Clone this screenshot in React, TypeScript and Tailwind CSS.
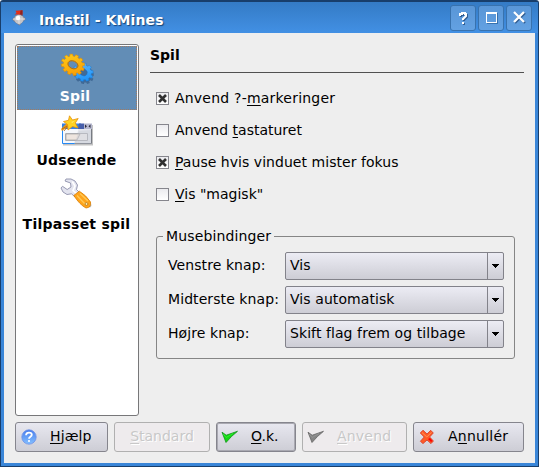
import type { ReactNode } from "react";

const U = ({ children }: { children: ReactNode }) => (
  <span className="underline decoration-1 underline-offset-2 [text-decoration-skip-ink:none]">{children}</span>
);

const gearPoints = (cx: number, cy: number, rx: number, ry: number, n: number) => {
  const pts: string[] = [];
  for (let i = 0; i < n; i++) {
    [[-0.32, 0.82], [-0.24, 1], [0.24, 1], [0.32, 0.82]].forEach(([o, r]) => {
      const a = ((i + o) / n) * Math.PI * 2;
      pts.push(`${(cx + Math.cos(a) * rx * r).toFixed(2)},${(cy + Math.sin(a) * ry * r).toFixed(2)}`);
    });
  }
  return "M" + pts.join("L") + "Z";
};

const Gears = () => (
  <svg width="34" height="32" viewBox="0 0 34 32">
    <defs>
      <linearGradient id="gy" x1="0" y1="0" x2="1" y2="1">
        <stop offset="0" stopColor="#ffd21c" />
        <stop offset="1" stopColor="#f79400" />
      </linearGradient>
      <linearGradient id="gb" x1="0" y1="0" x2="1" y2="1">
        <stop offset="0" stopColor="#64bcff" />
        <stop offset="1" stopColor="#0f8af5" />
      </linearGradient>
    </defs>
    <g transform="rotate(30 23 20)">
      <path d={gearPoints(24.2, 21, 10.4, 9, 10)} fill="#2c5480" opacity=".6" transform="translate(1 1)" />
      <path fillRule="evenodd" d={gearPoints(23.3, 20, 10.4, 9, 10) + "M27.5,20A4.5,3.4 0 1 0 18.5,20A4.5,3.4 0 1 0 27.5,20Z"} fill="url(#gb)" stroke="#1874cc" strokeWidth=".4" />
    </g>
    <g transform="rotate(24 12.5 13)">
      <path fillRule="evenodd" d={gearPoints(12.8, 12.6, 12, 10.4, 12) + "M18,12.6A5.2,3.7 0 1 0 7.6,12.6A5.2,3.7 0 1 0 18,12.6Z"} fill="url(#gy)" stroke="#df8b00" strokeWidth=".5" />
      <ellipse cx="12.8" cy="12.6" rx="5.2" ry="3.8" fill="none" stroke="#a96c1c" strokeWidth=".8" />
    </g>
  </svg>
);

const WindowStar = () => (
  <svg width="34" height="32" viewBox="0 0 34 32">
    <rect x="3" y="10" width="30" height="20.5" fill="#999" opacity=".6" />
    <rect x="2" y="9" width="30" height="20" fill="#e4e6ec" />
    <path d="M2 9H20L14 29H2Z" fill="#f6f8fc" />
    <path d="M2.5 12V28.5H15" fill="none" stroke="#2589f4" />
    <path d="M15 28.5H31.5V9" fill="none" stroke="#777b83" />
    <path d="M2 8.5H21V14H2Z" fill="#3482e5" />
    <path d="M19 8.5H24V14H18Z" fill="#485faa" />
    <path d="M24 8.5H32V14H24Z" fill="#b6b8cf" />
    <path d="M25 9.5V13L27 11.3ZM30.5 9.5V13L28.5 11.3Z" fill="#29293b" />
    <path d="M5.5 18.5H27.5V25.5H5.5Z" fill="#f0eeee" stroke="#b3b4b9" />
    <path d="M6 19H20L17 25H6Z" fill="#eee5df" stroke="#999" strokeWidth=".6" />
    <path d="M19 16L14 29H31V15Z" fill="#bfc4cf" opacity=".35" />
    <path d="M1 14L7 8L9 11L2 16Z" fill="#ef9b13" />
    <path d="M2 14L9 10L4 16" fill="none" stroke="#a75d18" strokeWidth=".8" />
    <path d="M9.5 .8L12.5 5L18.2 3.5L15.3 8L18 13L12.5 11.5L8 15L7.5 9.5L3.5 6.5L8.5 5.3Z" fill="#ffd323" stroke="#e6920b" strokeWidth=".8" />
    <path d="M10 4L11.5 7L15 5.5L12 8" fill="#fff17b" />
  </svg>
);

const Wrench = () => (
  <svg width="34" height="32" viewBox="0 0 34 32">
    <path d="M15 15L28 28.5Q31 31 31.5 27L22 15Z" fill="#777" opacity=".5" />
    <path d="M6 1L11 1L15 3L17.5 7L16.5 11.5L20 15L15 19L11.5 15.8L7 16.5L3 14L1 10L2.5 8.3L7.2 11.5L11 9L10.5 5L5 3Z" fill="#e3e4ef" stroke="#8d90aa" strokeWidth=".9" />
    <path d="M12.3 3.5L15 8L13 12.5L17 16" fill="none" stroke="#fff" strokeWidth="1.6" />
    <path d="M13.8 17.5L19.3 13.2Q26 17 30.5 24Q31.5 29.5 26 30Q20 27 13.8 17.5Z" fill="#ffa41b" stroke="#d97e00" strokeWidth=".8" />
    <path d="M17 17.5L25 26M20 15.5L28 23" stroke="#ffc955" strokeWidth="1.3" />
    <circle cx="26.5" cy="26" r="1.4" fill="#fff0ba" stroke="#9a5c00" strokeWidth=".6" />
  </svg>
);

const MineIcon = () => (
  <svg className="shrink-0" width="14" height="16" viewBox="0 0 14 16">
    <path d="M6.5 4L10 5.5L13.6 9L10.5 11.8L7.5 15.2L4 12.8L.4 9.5L3.5 6Z" fill="#a9a9b0" stroke="#777b86" strokeWidth=".6" />
    <circle cx="7" cy="9.3" r="4.4" fill="#c4c4c8" />
    <path d="M1 9H13M7 5V14" stroke="#e8e8e8" strokeWidth=".8" />
    <circle cx="6" cy="8" r="2.2" fill="#fff" />
    <path d="M3.5 .8L10.5 .3V4.5H2.5L4.5 3Z" fill="#e52e16" />
    <path d="M8.5 .5L10.5 .3V5.5H9.5V4.5H8Z" fill="#8e2420" />
  </svg>
);

const Check = ({ gray = false }: { gray?: boolean }) => (
  <svg className="shrink-0" width="18" height="14" viewBox="0 0 18 14">
    <path d="M1 2.2L5.2 5.2L16.5 1.3L10.5 6.5L5 12.5Z" fill={gray ? "#858585" : "#13d613"} stroke={gray ? "#656565" : "#12921a"} strokeWidth=".8" strokeLinejoin="round" />
    <path d="M2.2 4L5.2 7.5L12 3.5" fill="none" stroke={gray ? "#949494" : "#2cf02c"} />
  </svg>
);

const Cross = () => (
  <svg className="shrink-0" width="16" height="16" viewBox="0 0 16 16">
    <path d="M4 1.2L8 5L11.7 1.3L14.3 4L10.6 8L14.4 12L12 14.6L8 11L4 14.6L1.4 12.3L5.2 8L1.3 4Z" fill="#ff5a26" stroke="#d7432d" strokeWidth=".9" />
    <path d="M3 3.5L7.8 8L12.5 3.3" fill="none" stroke="#ff9257" />
    <path d="M9 10L12 13L13.5 12L11 9Z" fill="#f00" />
  </svg>
);

const Help = () => (
  <svg className="shrink-0" width="16" height="16" viewBox="0 0 16 16">
    <defs>
      <linearGradient id="help" x1="0" y1="0" x2="0" y2="1">
        <stop offset="0" stopColor="#477dec" />
        <stop offset="1" stopColor="#84c0ff" />
      </linearGradient>
    </defs>
    <circle cx="8" cy="8" r="7.2" fill="url(#help)" stroke="#6c91e8" strokeWidth=".8" />
    <path d="M5 6.2Q5.2 3.6 8 3.6Q10.8 3.6 10.8 5.8C10.8 7.8 8 7.7 8 9.7" fill="none" stroke="#fff" strokeWidth="1.8" />
    <circle cx="8" cy="12" r="1.1" fill="#fff" />
  </svg>
);

const TitleButton = ({ children }: { children: ReactNode }) => (
  <div className="flex h-[26px] w-[26px] items-center justify-center rounded-[3px] border border-[#3872ae] bg-linear-to-b from-[#5996d7] to-[#63a1e2]">{children}</div>
);

const CheckRow = ({ checked, children }: { checked?: boolean; children: ReactNode }) => (
  <label className="flex h-8 items-center">
    <span className="flex h-[13px] w-[13px] items-center justify-center border border-[#85858c] bg-linear-to-b from-[#ebebee] to-white">
      {checked && (
        <svg width="11" height="11" viewBox="0 0 11 11">
          <path d="M2 2L9 9M9 2L2 9" stroke="#303030" strokeWidth="2.6" />
        </svg>
      )}
    </span>
    <span className="ml-1.5">{children}</span>
  </label>
);

const SelectRow = ({ label, value }: { label: string; value: string }) => (
  <div className="flex h-7 items-center tracking-[0.08px]">
    <span className="w-[117px] pb-0.5">{label}</span>
    <div className="flex h-7 w-[219px] rounded-[2px] border border-[#82828a] bg-linear-to-b from-[#ececf4] to-[#cdcdd5]">
      <span className="flex flex-1 items-center pb-0.5 pl-1">{value}</span>
      <span className="flex w-4 items-center justify-center border-l border-[#82828a]">
        <svg width="7" height="4" viewBox="0 0 7 4" shapeRendering="crispEdges">
          <path d="M0 0H7V1H6V2H5V3H4V4H3V3H2V2H1V1H0Z" fill="#000" />
        </svg>
      </span>
    </div>
  </div>
);

const buttonBase = "flex h-[30px] items-center rounded-[3px] border";
const activeButton = "border-[#85858d] bg-linear-to-b from-[#e8e8f0] to-[#cdcdd5]";
const disabledButton = "border-[#b0b0b0] bg-[#eeebed] text-[#c8c8c8] [text-shadow:1px_1px_0_#ffffff]";

export default function App() {
  return (
    <div className="flex h-[467px] w-[539px] flex-col overflow-hidden rounded-t-[3px] border border-t-2 border-[#183e6b] bg-[#3a86d8] font-['DejaVu_Sans',sans-serif] text-[14px] leading-4 text-black">
      <header className="flex h-[31px] shrink-0 items-center bg-linear-to-b from-[#347bc5] to-[#4290e4] pl-[11px] pr-1.5">
        <MineIcon />
        <h1 className="ml-[13px] mt-1 flex-1 text-[14px] font-bold tracking-[0.12px] text-white [text-shadow:1px_1px_1px_#174477]">Indstil - KMines</h1>
        <div className="flex gap-0.5">
          <TitleButton>
            <svg width="10" height="14" viewBox="0 0 10 14"><path d="M2 5V3H4V2H7V3H8V5L5 8V9M5 11V13" fill="none" stroke="#315d91" strokeWidth="2" transform="translate(1 1)" /><path d="M2 5V3H4V2H7V3H8V5L5 8V9M5 11V13" fill="none" stroke="#fff" strokeWidth="2" /></svg>
          </TitleButton>
          <TitleButton><span className="h-[11px] w-[11px] border border-t-2 border-white shadow-[1px_1px_0_#3872ae]" /></TitleButton>
          <TitleButton>
            <svg width="13" height="13" viewBox="0 0 13 13"><path d="M2 2L12 12M12 2L2 12" stroke="#315d91" strokeWidth="2.3" /><path d="M1 1L11 11M11 1L1 11" stroke="#fff" strokeWidth="2.3" /></svg>
          </TitleButton>
        </div>
      </header>
      <main className="mx-[3px] mb-[3px] flex flex-1 flex-col bg-[#eeeeee] pl-[11px] pr-[10px] pt-[11px]">
        <div className="flex h-[372px] gap-[11px]">
          <nav className="flex w-[124px] shrink-0 flex-col rounded-[3px] border border-[#777779] bg-white p-px font-bold tracking-[0.25px]">
            <div className="flex h-16 flex-col items-center border border-dotted border-[#a27b61] bg-[#628db6] pt-[5px] text-white"><Gears /><span className="mt-1 pr-1">Spil</span></div>
            <div className="flex h-16 flex-col items-center pt-[5px]"><WindowStar /><span className="mt-[5px] pr-px">Udseende</span></div>
            <div className="flex h-16 flex-col items-center pt-1"><Wrench /><span className="mt-1.5 whitespace-nowrap pr-px">Tilpasset spil</span></div>
          </nav>
          <section className="w-[374px]">
            <h2 className="mt-[3px] h-[26px] border-b border-[#505050] text-[14px] font-bold">Spil</h2>
            <div className="ml-1.5 mt-[9px]">
              <CheckRow checked><span className="tracking-[0.21px]">Anvend ?-<U>m</U>arkeringer</span></CheckRow>
              <CheckRow>Anvend <U>t</U>astaturet</CheckRow>
              <CheckRow checked><span className="tracking-[0.04px]"><U>P</U>ause hvis vinduet mister fokus</span></CheckRow>
              <CheckRow><U>V</U>is "magisk"</CheckRow>
            </div>
            <fieldset className="ml-1.5 mt-[18px] h-[131px] w-[359px] rounded-[3px] border border-[#858585] pl-[11px]">
              <legend className="-ml-[5px] px-[3px] tracking-[0.13px]">Musebindinger</legend>
              <div className="flex flex-col gap-1.5 pt-2">
                <SelectRow label="Venstre knap:" value="Vis" />
                <SelectRow label="Midterste knap:" value="Vis automatisk" />
                <SelectRow label="Højre knap:" value="Skift flag frem og tilbage" />
              </div>
            </fieldset>
          </section>
        </div>
        <footer className="mt-1.5 flex [&>button>span]:-mt-0.5">
          <button className={`${buttonBase} ${activeButton} w-[93px] pl-[5px]`}><Help /><span className="ml-[13px] tracking-[0.1px]"><U>H</U>jælp</span></button>
          <button className={`${buttonBase} ${disabledButton} ml-1.5 w-24 justify-center`}><span><U>S</U>tandard</span></button>
          <button className={`${buttonBase} ${activeButton} ml-1.5 w-20 pl-1 shadow-[inset_0_0_0_1px_#a9a9b1]`}><Check /><span className="ml-3"><U>O</U>.k.</span></button>
          <button className={`${buttonBase} ${disabledButton} ml-1.5 w-[105px] pl-1`}><Check gray /><span className="ml-3 tracking-[0.2px]"><U>A</U>nvend</span></button>
          <button className={`${buttonBase} ${activeButton} ml-1.5 w-[111px] pl-[5px]`}><Cross /><span className="ml-[13px] tracking-[0.25px]">A<U>n</U>nullér</span></button>
        </footer>
      </main>
    </div>
  );
}
